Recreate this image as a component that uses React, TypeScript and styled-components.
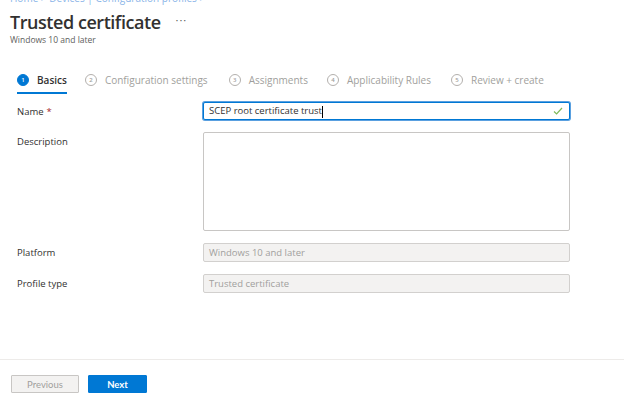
import React from "react";
import styled, { createGlobalStyle } from "styled-components";

const Global = createGlobalStyle`
  html, body { margin: 0; padding: 0; background: #fff; }
  body { font-family: "Open Sans", "Noto Sans", sans-serif; color: #323130; }
  * { box-sizing: border-box; }
`;

const Page = styled.div`
  width: 624px;
  height: 398px;
  overflow: hidden;
  display: flex;
  flex-direction: column;
  position: relative;
`;

const Header = styled.div`
  padding: 0 0 0 10px;
  display: flex;
  flex-direction: column;
`;

const Breadcrumb = styled.div`
  margin-top: -7px;
  height: 11px;
  font-size: 10px;
  line-height: 11px;
  color: #8ab4e8;
  white-space: nowrap;
`;

const TitleRow = styled.div`
  display: flex;
  align-items: center;
  margin-top: 6px;
  height: 24px;
`;

const Title = styled.h1`
  margin: 0;
  font-size: 18px;
  font-weight: 600;
  color: #323130;
  letter-spacing: -0.45px;
`;

const More = styled.span`
  margin-left: 15px;
  font-size: 11px;
  color: #605e5c;
  letter-spacing: 1px;
  position: relative;
  top: -3px;
`;

const Subtitle = styled.div`
  font-size: 8.5px;
  color: #605e5c;
  margin-top: 0;
`;

const Steps = styled.div`
  display: flex;
  margin: 23px 0 0 17px;
`;

const Step = styled.div<{ $active?: boolean; $gap: number }>`
  display: flex;
  align-items: center;
  gap: 8px;
  height: 26px;
  margin-right: ${(p) => p.$gap}px;
  border-bottom: 2px solid ${(p) => (p.$active ? "#0078d4" : "transparent")};
  font-size: 10px;
  font-weight: ${(p) => (p.$active ? 600 : 400)};
  color: ${(p) => (p.$active ? "#323130" : "#a19f9d")};
  white-space: nowrap;
`;

const StepNum = styled.span<{ $active?: boolean }>`
  width: 12px;
  height: 12px;
  border-radius: 50%;
  display: inline-flex;
  align-items: center;
  justify-content: center;
  font-size: 6px;
  font-weight: 600;
  background: ${(p) => (p.$active ? "#0078d4" : "#fff")};
  color: ${(p) => (p.$active ? "#fff" : "#a19f9d")};
  border: 1px solid ${(p) => (p.$active ? "#0078d4" : "#b3b0ad")};
`;

const Form = styled.div`
  display: grid;
  grid-template-columns: 186px 367px;
  row-gap: 12px;
  margin: 8px 0 0 17px;
`;

const Label = styled.div<{ $top?: number }>`
  font-size: 9.5px;
  color: #323130;
  padding-top: ${(p) => p.$top ?? 3}px;
`;

const Req = styled.span`
  color: #a4262c;
  margin-left: 3px;
`;

const Field = styled.div<{ $h: number; $focus?: boolean; $disabled?: boolean }>`
  height: ${(p) => p.$h}px;
  border: 1px solid ${(p) => (p.$focus ? "#0078d4" : p.$disabled ? "#d2d0ce" : "#c8c6c4")};
  box-shadow: ${(p) => (p.$focus ? "0 0 0 1px #5aa0e0" : "none")};
  border-radius: 2px;
  background: ${(p) => (p.$disabled ? "#f3f2f1" : "#fff")};
  display: flex;
  align-items: center;
  padding: 0 6px 0 5px;
  font-size: 9.5px;
  color: ${(p) => (p.$disabled ? "#a19f9d" : "#323130")};
`;

const Value = styled.span`
  flex: 1;
  white-space: nowrap;
`;

const Caret = styled.span`
  display: inline-block;
  width: 1px;
  height: 12px;
  background: #000;
  vertical-align: middle;
`;

const Footer = styled.div`
  margin-top: auto;
  border-top: 1px solid #edebe9;
  height: 39px;
  display: flex;
  align-items: flex-start;
  gap: 9px;
  padding: 15px 0 0 11px;
`;

const Button = styled.button<{ $primary?: boolean }>`
  height: 18px;
  width: ${(p) => (p.$primary ? 59 : 68)}px;
  border-radius: 1px;
  font-family: "Lato", "Open Sans", sans-serif;
  font-size: 9.5px;
  font-weight: ${(p) => (p.$primary ? 700 : 400)};
  border: 1px solid ${(p) => (p.$primary ? "#0078d4" : "#c8c6c4")};
  background: ${(p) => (p.$primary ? "#0078d4" : "#f3f2f1")};
  color: ${(p) => (p.$primary ? "#fff" : "#a19f9d")};
  padding: 0;
`;

const steps = [
  { n: 1, t: "Basics", gap: 18 },
  { n: 2, t: "Configuration settings", gap: 21 },
  { n: 3, t: "Assignments", gap: 19 },
  { n: 4, t: "Applicability Rules", gap: 20 },
  { n: 5, t: "Review + create", gap: 0 },
];

export default function App() {
  return (
    <Page>
      <Global />
      <Header>
        <Breadcrumb>Home &gt; Devices | Configuration profiles &gt;</Breadcrumb>
        <TitleRow>
          <Title>Trusted certificate</Title>
          <More>···</More>
        </TitleRow>
        <Subtitle>Windows 10 and later</Subtitle>
      </Header>
      <Steps>
        {steps.map((s) => (
          <Step key={s.n} $active={s.n === 1} $gap={s.gap}>
            <StepNum $active={s.n === 1}>{s.n}</StepNum>
            {s.t}
          </Step>
        ))}
      </Steps>
      <Form>
        <Label>
          Name<Req>*</Req>
        </Label>
        <Field $h={18} $focus>
          <Value>
            SCEP root certificate trust<Caret />
          </Value>
          <svg width="10" height="8" viewBox="0 0 10 8">
            <path d="M1 4.5 L3.6 7 L9 1" fill="none" stroke="#7fba5a" strokeWidth="1.2" />
          </svg>
        </Field>
        <Label>Description</Label>
        <Field $h={99} />
        <Label>Platform</Label>
        <Field $h={19} $disabled>
          <Value>Windows 10 and later</Value>
        </Field>
        <Label>Profile type</Label>
        <Field $h={19} $disabled>
          <Value>Trusted certificate</Value>
        </Field>
      </Form>
      <Footer>
        <Button>Previous</Button>
        <Button $primary>Next</Button>
      </Footer>
    </Page>
  );
}
